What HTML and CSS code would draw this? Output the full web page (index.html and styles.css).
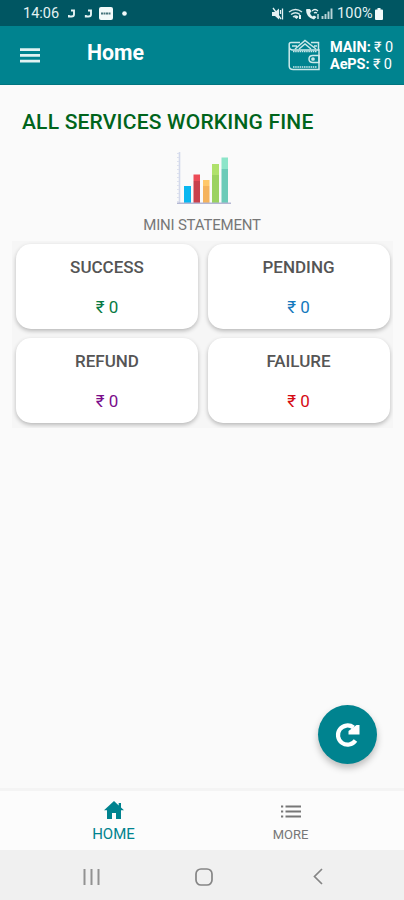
FILE: index.html
```html
<!DOCTYPE html>
<html lang="en">
<head>
<meta charset="utf-8">
<title>Home</title>
<link rel="stylesheet" href="styles.css">
</head>
<body>
<div class="screen">
  <div class="status">
    <span class="time">14:06</span>
    <svg class="notices" width="62" height="16" viewBox="0 0 62 16">
      <g fill="none" stroke="#e4f2f3" stroke-width="1.900"><path d="M3 4.500h3v4q0 2-2.500 2H.8V9M20 4.500h3v4q0 2-2.500 2h-2.700V9"/></g>
      <rect x="31" y="1" width="14" height="13" rx="2" fill="#f2fafa"/>
      <path d="M33 7.500h10" stroke="#46757c" stroke-width="2.200" stroke-dasharray="2 .5"/>
      <circle cx="56.500" cy="7.500" r="2.300" fill="#f2fafa"/>
    </svg>
    <svg class="signals" width="61" height="16" viewBox="0 0 61 16">
      <path fill="#e4f2f3" d="M0 6h3l4-3.500v11L3 10H0z"/>
      <path d="M1 2l8 11M10.500 2.500v11M8.500 4v4" stroke="#e4f2f3" stroke-width="1.300"/>
      <g fill="none" stroke="#d4e7e9" stroke-width="1.400"><path d="M17 6q6.500-5 13 0M19 8.500q4.500-3.500 9 0M21 11q2.500-2 5 0"/></g>
      <path fill="#e4f2f3" d="M22 11l2.500 2 2-2-2-1zM27 9h2v4h-2z"/>
      <path d="M34 3.500q0 8 8 10l2.500-2.500-2.500-1.500-1.500 1q-2-1.500-2.500-3.500l1.500-1.500L38 3h-3z" fill="#e4f2f3"/>
      <path d="M40 5q3-3 6 0M42 7q1.500-1 3 0M46 8v5" fill="none" stroke="#e4f2f3" stroke-width="1.300"/>
      <path d="M50.500 13v-3M53.500 13V8M56.500 13V5.500M59.500 13V2.500" stroke="#b9d3d7" stroke-width="1.900"/>
    </svg>
    <span class="percent">100%</span>
    <svg class="battery" width="8" height="12" viewBox="0 0 8 12"><path fill="#f2fafa" d="M2.500 0h3v1.500H7q1 0 1 1V11q0 1-1 1H1q-1 0-1-1V2.500q0-1 1-1h1.500z"/></svg>
  </div>

  <header class="appbar">
    <svg class="burger" width="20" height="15" viewBox="0 0 20 15"><path d="M0 1.700h20M0 7.400h20M0 13.100h20" stroke="#e0f2f2" stroke-width="2.700"/></svg>
    <h1>Home</h1>
    <svg class="wallet" width="33" height="33" viewBox="0 0 33 33" fill="none" stroke="#cce9ea" stroke-width="1.500">
      <path d="M3 3.500Q1.200 3.500 1.200 5.500V27q0 3.500 4 3.500H31V11H5Q1.200 11 1.200 7"/>
      <path d="M3 3.500h9M23 3.500h7.500V11"/>
      <path d="M7 10L17 1.500 28 10M11 10l6-5 6 5M4 7h5M26 7h3"/>
      <path d="M5 12.500h24M5 28h24" stroke-dasharray="1.500 .7"/>
      <path d="M31 16.500h-6q-4 0-4 3.500t4 3.500h6z"/>
      <circle cx="25" cy="20" r="1.100" fill="#cce9ea"/>
    </svg>
    <div class="balances">
      <div class="main"><b>MAIN:</b> ₹ 0</div>
      <div class="aeps"><b>AePS:</b> ₹ 0</div>
    </div>
  </header>

  <main>
    <p class="notice">ALL SERVICES WORKING FINE</p>
    <section class="statement">
      <svg width="54" height="53" viewBox="0 0 54 53">
        <path d="M2.500 0v51" stroke="#d3d9eb" stroke-width="1.600"/>
        <path d="M1 1v50" stroke="#dde1ef" stroke-width="2" stroke-dasharray="1 3"/>
        <path fill="#09b7f0" d="M7 34h7v17H7z"/>
        <path fill="#ec4b57" d="M16.500 22.500h6.500V29h-6.500z"/><path fill="#c9414c" d="M16.500 29h6.500v22h-6.500z"/>
        <path fill="#ffc86a" d="M26 28h6.500v6H26z"/><path fill="#f5b35c" d="M26 34h6.500v17H26z"/>
        <path fill="#afe16b" d="M35 12h7v11h-7z"/><path fill="#9bd260" d="M35 23h7v28h-7z"/>
        <path fill="#8ce5c9" d="M44.500 5.500H51V17h-6.500z"/><path fill="#6bcbb8" d="M44.500 17H51v34h-6.500z"/>
        <path d="M0 51.300h54" stroke="#b4b7d3" stroke-width="1.500"/>
      </svg>
      <h2>MINI STATEMENT</h2>
    </section>
    <section class="cards">
      <div class="card"><h3>SUCCESS</h3><p class="success">₹ 0</p></div>
      <div class="card"><h3>PENDING</h3><p class="pending">₹ 0</p></div>
      <div class="card"><h3>REFUND</h3><p class="refund">₹ 0</p></div>
      <div class="card"><h3>FAILURE</h3><p class="failure">₹ 0</p></div>
    </section>
  </main>

  <button class="refresh" aria-label="Refresh">
    <svg width="26" height="26" viewBox="0 0 26 26"><path d="M20.500 18.500A9.600 9.600 0 1 1 18.500 5.500" fill="none" stroke="#fff" stroke-width="4.200"/><path d="M24.500 3h-3L13.500 9v3.500h11z" fill="#fff"/></svg>
  </button>

  <nav class="tabs">
    <a class="tab active">
      <svg width="20" height="18" viewBox="0 0 20 18"><path fill="#00838f" d="M10 0L0 9.300h3V18h5v-6h4v6h5V9.300h3L17 6.500V2h-2.300v2.400z"/></svg>
      <span>HOME</span>
    </a>
    <a class="tab">
      <svg width="20" height="13" viewBox="0 0 20 13"><path d="M0 1.500h2.200M4.500 1.500H20M0 6.500h2.200M4.500 6.500H20M0 11.500h2.200M4.500 11.500H20" stroke="#777" stroke-width="1.900"/></svg>
      <span>MORE</span>
    </a>
  </nav>
  <div class="system">
    <svg width="17" height="16" viewBox="0 0 17 16"><path d="M1.500 0v16M8.500 0v16M15.500 0v16" stroke="#929292" stroke-width="2"/></svg>
    <svg class="home-key" width="18" height="18" viewBox="0 0 18 18"><rect x="1" y="1" width="16" height="16" rx="5" fill="none" stroke="#858585" stroke-width="1.700"/></svg>
    <svg width="10" height="17" viewBox="0 0 10 17"><path d="M9 1L1.500 8.500 9 16" fill="none" stroke="#858585" stroke-width="1.700"/></svg>
  </div>
</div>
</body>
</html>
```
FILE: styles.css
```css
* { box-sizing: border-box; }
body { margin: 0; font-family: Roboto, "Noto Sans", sans-serif; }
h1, h2, h3, p { margin: 0; }
svg { display: block; flex: none; }
.screen {
  position: relative;
  display: flex;
  flex-direction: column;
  width: 404px;
  height: 900px;
  background: #fafafa;
  overflow: hidden;
}
.status {
  display: flex;
  align-items: center;
  height: 26px;
  padding: 1px 21px 0 23px;
  background: #005662;
  color: #e4f2f3;
  font-size: 14.5px;
  white-space: nowrap;
}
.time { width: 37px; }
.notices { margin-left: 8px; }
.signals { margin-left: auto; }
.percent { width: 38px; margin-left: 4px; letter-spacing: .2px; }
.appbar {
  display: flex;
  height: 59px;
  padding-left: 20px;
  background: #00838f;
  border-bottom: 1px solid #007580;
  color: #fff;
}
.burger { margin-top: 22px; }
.appbar h1 {
  width: 58px;
  margin: 14px 0 0 47px;
  font-size: 21.3px;
  line-height: 26px;
  font-weight: 700;
}
.wallet { margin: 13px 0 0 143px; }
.balances {
  margin: 13px 0 0 9px;
  font-size: 14.5px;
  line-height: 17px;
  letter-spacing: -.1px;
  white-space: nowrap;
}
.balances b { font-weight: 700; }
main { flex: 1; }
.notice {
  margin: 24px 0 0 22px;
  color: #00641b;
  font-size: 21px;
  line-height: 26px;
  font-weight: 500;
  letter-spacing: .2px;
  white-space: nowrap;
}
.statement {
  display: flex;
  flex-direction: column;
  align-items: center;
  margin-top: 17px;
}
.statement svg { margin-left: 3px; }
.statement h2 {
  margin-top: 10px;
  color: #777;
  font-size: 15px;
  line-height: 20px;
  font-weight: 400;
  letter-spacing: -.2px;
}
.cards {
  display: grid;
  grid-template-columns: 182px 182px;
  grid-template-rows: 85px 85px;
  gap: 9px 9.500px;
  width: 381px;
  height: 187px;
  margin: 6px 0 0 12px;
  padding: 3px 4px 5px;
  background: #f6f6f6;
  overflow: hidden;
}
.card {
  padding-top: 13px;
  border-radius: 15px;
  background: #fff;
  box-shadow: 0 2px 4px rgba(0, 0, 0, .25);
  text-align: center;
}
.card h3 {
  color: #555;
  font-size: 17px;
  line-height: 20px;
  font-weight: 500;
}
.card p {
  margin-top: 20px;
  font-size: 17px;
  line-height: 20px;
}
.success { color: #087a43; }
.pending { color: #1479bd; }
.refund { color: #7b0d8b; }
.failure { color: #d60b13; }
.refresh {
  position: absolute;
  right: 27px;
  bottom: 136px;
  display: grid;
  place-items: center;
  width: 59px;
  height: 59px;
  padding: 0;
  border: 0;
  border-radius: 50%;
  background: #00838f;
  box-shadow: 0 4px 7px rgba(0, 0, 0, .25);
}
.tabs {
  display: flex;
  height: 62px;
  padding: 0 25px;
  border-top: 3px solid #f4f4f4;
  background: #fcfcfc;
}
.tab {
  display: flex;
  flex: 1;
  flex-direction: column;
  align-items: center;
  padding-top: 14px;
  color: #777;
  font-size: 13px;
  line-height: 16px;
}
.tab span { margin-top: 9px; }
.tab.active { padding-top: 10px; color: #00838f; font-size: 15px; }
.tab.active span { margin-top: 7px; }
.system {
  display: flex;
  align-items: center;
  justify-content: space-between;
  height: 50px;
  padding: 3px 81px 0 83px;
  background: #f0f0f0;
}
.home-key { margin-right: 5px; }
```
